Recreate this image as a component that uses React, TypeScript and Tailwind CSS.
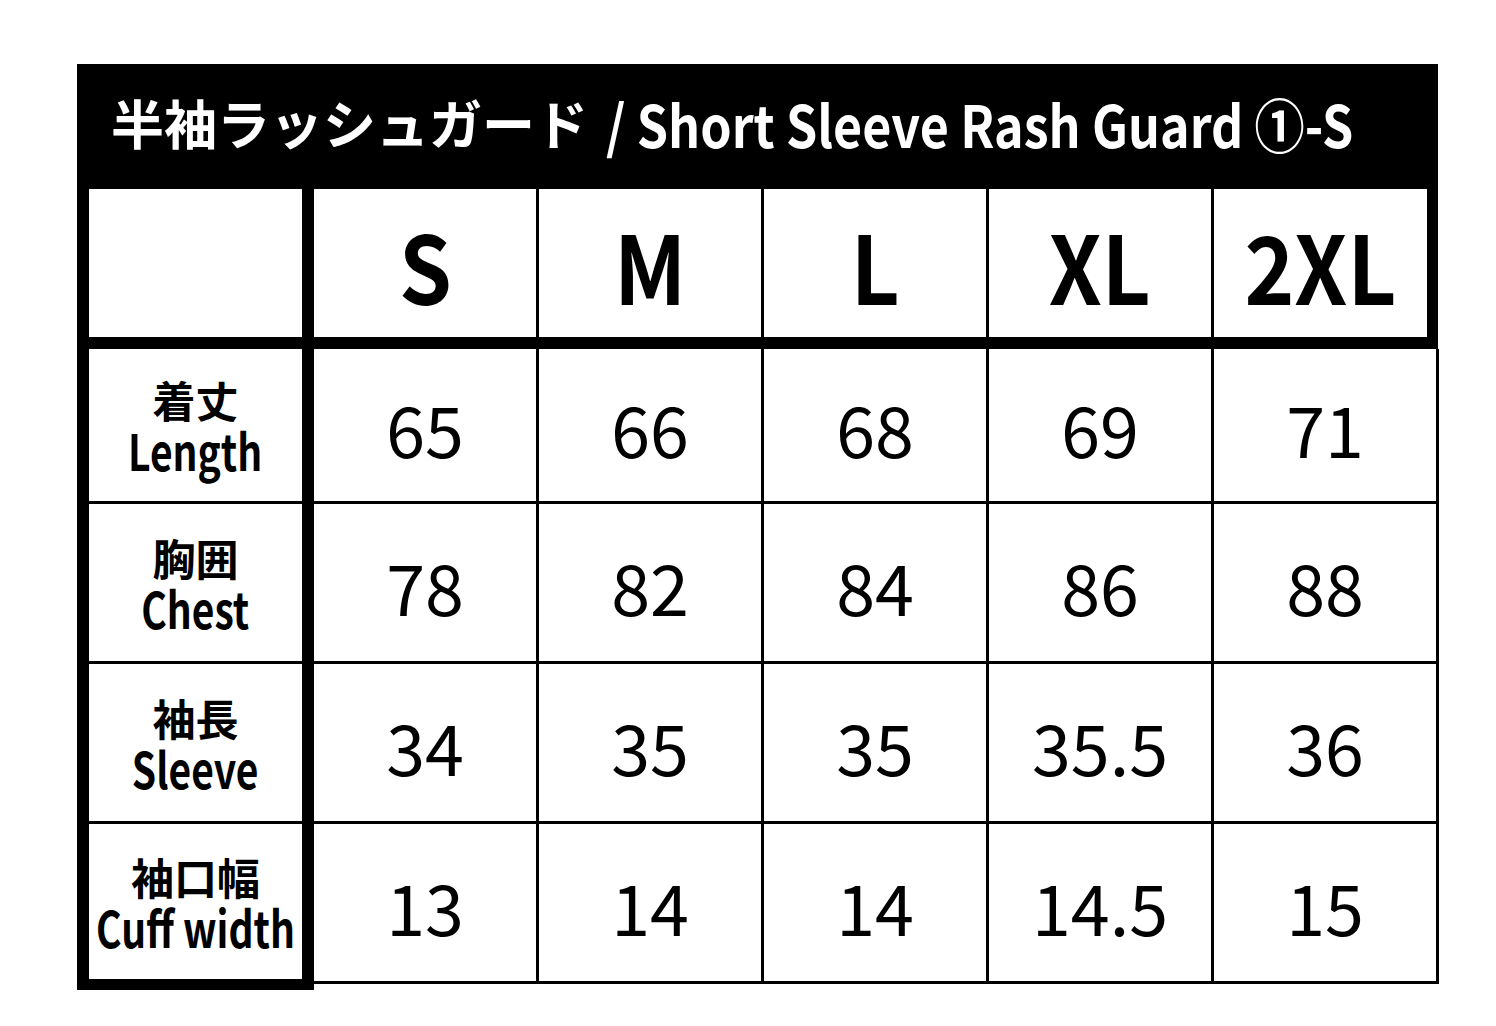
const SIZES = ['S', 'M', 'L', 'XL', '2XL'];

const ROWS = [
  { ja: '着丈', en: 'Length', values: ['65', '66', '68', '69', '71'], h: 'h-[155px]' },
  { ja: '胸囲', en: 'Chest', values: ['78', '82', '84', '86', '88'], h: 'h-[160px]' },
  { ja: '袖長', en: 'Sleeve', values: ['34', '35', '35', '35.5', '36'], h: 'h-[160px]' },
  { ja: '袖口幅', en: 'Cuff width', values: ['13', '14', '14', '14.5', '15'], h: 'h-[160px]' },
];

function RowLabel({ ja, en }: { ja: string; en: string }) {
  return (
    <div className="flex h-full flex-col items-center justify-center font-bold text-black">
      <div className="text-[43px] leading-[48px]">{ja}</div>
      <div className="inline-block scale-x-[0.78] whitespace-nowrap text-[50px] leading-[52px]">{en}</div>
    </div>
  );
}

export default function App() {
  return (
    <div className="min-h-screen bg-white pl-[77px] pt-[64px] font-['Noto_Sans_CJK_JP','Noto_Sans',sans-serif] text-black">
      {/* title band */}
      <div className="flex h-[125px] w-[1361px] items-center bg-black pb-[8px] pl-[34px] font-bold text-white">
        <span className="whitespace-nowrap text-[53px] leading-none">半袖ラッシュガード</span>
        <span className="ml-[18px] inline-block origin-left scale-x-[0.865] whitespace-nowrap text-[58px] leading-none">
          / Short Sleeve Rash Guard ①-S
        </span>
      </div>

      {/* size header row */}
      <div className="flex h-[160px] w-[1361px] border-b-[12px] border-black">
        <div className="w-[237px] border-x-[12px] border-black bg-white" />
        {SIZES.slice(0, 4).map((s) => (
          <div
            key={s}
            className="flex w-[225px] items-center justify-center border-r-[3px] border-black pt-[2px]"
          >
            <span className="inline-block scale-x-[0.9] text-[94px] font-bold leading-none">{s}</span>
          </div>
        ))}
        <div className="flex w-[224px] items-center justify-center border-r-[11px] border-black pt-[2px]">
          <span className="inline-block scale-x-[0.9] text-[94px] font-bold leading-none">2XL</span>
        </div>
      </div>

      {/* measurements */}
      <div className="flex">
        <div className="w-[237px] border-x-[12px] border-b-[11px] border-black">
          {ROWS.map((r, i) => (
            <div
              key={r.en}
              className={i === ROWS.length - 1 ? 'h-[155px]' : `${r.h} border-b-[3px] border-black`}
            >
              <RowLabel ja={r.ja} en={r.en} />
            </div>
          ))}
        </div>
        <div className="w-[1125px]">
          {ROWS.map((r) => (
            <div key={r.en} className={`flex ${r.h}`}>
              {r.values.map((v, j) => (
                <div
                  key={j}
                  className="flex w-[225px] items-center justify-center border-b-[3px] border-r-[3px] border-black pt-[6px] text-[70px] font-normal leading-none"
                >
                  {v}
                </div>
              ))}
            </div>
          ))}
        </div>
      </div>
    </div>
  );
}
